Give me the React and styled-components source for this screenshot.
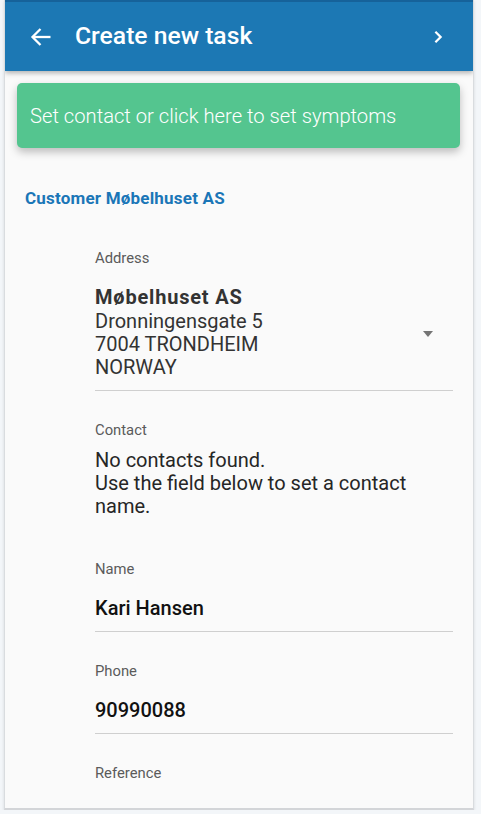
import React from "react";
import styled, { createGlobalStyle } from "styled-components";

const Global = createGlobalStyle`
  html, body { margin: 0; padding: 0; }
  body {
    background: #f3f6f9;
    font-family: Roboto, "Noto Sans", "Liberation Sans", sans-serif;
    -webkit-font-smoothing: antialiased;
  }
`;

const Frame = styled.div`
  margin-left: 4px;
  width: 470px;
  height: 810px;
  background: #fafafa;
  border-left: 1px solid #d9dcdf;
  border-right: 1px solid #d9dcdf;
  border-bottom: 2px solid #d3d5d8;
  box-shadow: 0 1px 3px rgba(0, 0, 0, 0.12);
  overflow: hidden;
  box-sizing: border-box;
`;

const Header = styled.header`
  height: 71px;
  box-sizing: border-box;
  background: #1c78b4;
  border-top: 2px solid #16629a;
  box-shadow: 0 2px 5px rgba(0, 0, 0, 0.3);
  display: flex;
  align-items: center;
  padding: 0 22px 0 23px;
  color: #fff;
  position: relative;
  z-index: 1;
`;

const IconButton = styled.button`
  background: none;
  border: 0;
  padding: 0;
  margin: 0;
  width: 26px;
  height: 26px;
  display: flex;
  align-items: center;
  justify-content: center;
  color: #fff;
  cursor: pointer;
`;

const Title = styled.h1`
  margin: -1px 0 0 21px;
  flex: 1;
  font-size: 24.7px;
  font-weight: 500;
  line-height: 28px;
`;

const Body = styled.main`
  padding: 12px 12px 0 12px;
`;

const Banner = styled.button`
  display: block;
  width: 443px;
  height: 65px;
  box-sizing: border-box;
  border: 0;
  border-radius: 5px;
  background: #54c58f;
  color: #fff;
  font-family: inherit;
  font-size: 20.2px;
  font-weight: 300;
  text-align: left;
  padding: 0 0 0 13px;
  box-shadow: 0 4px 8px rgba(0, 0, 0, 0.25);
  cursor: pointer;
`;

const Customer = styled.h2`
  margin: 40px 0 0 8px;
  font-size: 17px;
  line-height: 20px;
  font-weight: 700;
  letter-spacing: 0.2px;
  color: #1a76b7;
`;

const Fields = styled.div`
  margin: 41px 0 0 78px;
  width: 358px;
  display: flex;
  flex-direction: column;
  gap: 30px;
`;

const Field = styled.div`
  display: flex;
  flex-direction: column;
`;

const Label = styled.div`
  font-size: 14.8px;
  line-height: 18px;
  color: #5b5b5b;
`;

const Value = styled.div`
  margin-top: ${(p) => p.$gap}px;
  padding-bottom: ${(p) => p.$pad ?? 11}px;
  border-bottom: ${(p) => (p.$underline ? "1.5px solid #cfcfcf" : "none")};
  font-size: 20px;
  line-height: 23px;
  color: ${(p) => p.$color || "#333"};
  font-weight: ${(p) => p.$weight || 400};
  display: flex;
  align-items: center;
`;

const Lines = styled.div`
  flex: 1;
`;

const Strong = styled.div`
  font-weight: 700;
  letter-spacing: 0.8px;
  line-height: 25px;
`;

const Caret = styled.span`
  width: 0;
  height: 0;
  border-left: 5.5px solid transparent;
  border-right: 5.5px solid transparent;
  border-top: 6px solid #747474;
  margin-right: 20px;
  margin-top: 4px;
`;

export default function App() {
  return (
    <>
      <Global />
      <Frame>
        <Header>
          <IconButton aria-label="Back">
            <svg width="24" height="24" viewBox="0 0 24 24" fill="none" stroke="#fff" strokeWidth="2.3">
              <path d="M21.5 12H4" />
              <path d="M11.5 4 3.5 12 11.5 20" />
            </svg>
          </IconButton>
          <Title>Create new task</Title>
          <IconButton aria-label="Next">
            <svg width="18" height="18" viewBox="0 0 24 24" fill="none" stroke="#fff" strokeWidth="3">
              <path d="M8.5 5 15.5 12 8.5 19" />
            </svg>
          </IconButton>
        </Header>
        <Body>
          <Banner>Set contact or click here to set symptoms</Banner>
          <Customer>Customer Møbelhuset AS</Customer>
          <Fields>
            <Field>
              <Label>Address</Label>
              <Value $gap={18} $underline>
                <Lines>
                  <Strong>Møbelhuset AS</Strong>
                  <div>Dronningensgate 5</div>
                  <div>7004 TRONDHEIM</div>
                  <div>NORWAY</div>
                </Lines>
                <Caret />
              </Value>
            </Field>
            <Field>
              <Label>Contact</Label>
              <Value $gap={10} $pad={12} $color="#262626">
                No contacts found.
                <br />
                Use the field below to set a contact name.
              </Value>
            </Field>
            <Field>
              <Label>Name</Label>
              <Value $gap={19} $underline $color="#111" $weight={500}>
                Kari Hansen
              </Value>
            </Field>
            <Field>
              <Label>Phone</Label>
              <Value $gap={19} $underline $color="#111" $weight={500}>
                90990088
              </Value>
            </Field>
            <Field>
              <Label>Reference</Label>
            </Field>
          </Fields>
        </Body>
      </Frame>
    </>
  );
}
